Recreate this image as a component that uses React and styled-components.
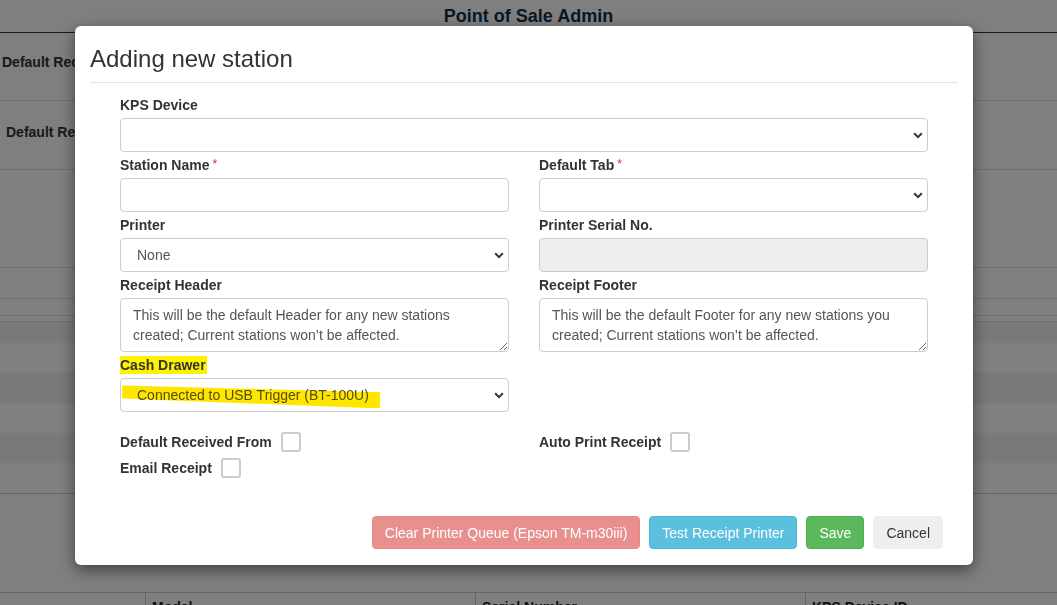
import React from "react"
import styled, { createGlobalStyle } from "styled-components"

const GlobalStyle = createGlobalStyle`
  html, body {
    margin: 0;
    padding: 0;
  }
  body {
    font-family: "Liberation Sans", Arial, sans-serif;
    font-size: 14px;
    color: #333;
    background: #fff;
    overflow: hidden;
  }
  * {
    box-sizing: border-box;
  }
`

/* ---------- page behind the dialog ---------- */

const Page = styled.div`
  width: 1057px;
  height: 605px;
  padding-right: 8px;
  overflow: hidden;
`

const PageTitle = styled.div`
  height: 33px;
  line-height: 32px;
  text-align: center;
  font-size: 18px;
  font-weight: 700;
  color: #12304a;
  border-bottom: 1px solid #1d3b57;
  margin-right: -8px;
`

const SettingRow = styled.div`
  display: flex;
  height: ${(props) => props.h}px;
  padding-top: ${(props) => props.pt || 0}px;
  padding-left: ${(props) => props.pl || 0}px;
  border-bottom: ${(props) => (props.line ? "1px solid #ddd" : "none")};
  margin-right: -8px;
`

const SettingLabel = styled.div`
  font-weight: 700;
  line-height: 20px;
  color: #333;
`

const StripeRow = styled.div`
  height: ${(props) => props.h}px;
  background: ${(props) => (props.odd ? "#f2f2f2" : "#fff")};
  border-bottom: ${(props) => (props.line ? "1px solid #ccc" : "none")};
  margin-right: -8px;
`

const TableHead = styled.div`
  display: grid;
  grid-template-columns: 145px 330px 330px 1fr;
  border-top: 1px solid #ccc;
  margin-right: -8px;
`

const HeadCell = styled.div`
  height: 30px;
  padding: 6px 6px 0;
  font-weight: 700;
  color: #222;
  border-left: ${(props) => (props.first ? "none" : "1px solid #ccc")};
`

/* ---------- dialog ---------- */

const Backdrop = styled.div`
  position: fixed;
  inset: 0;
  background: rgba(0, 0, 0, 0.5);
  display: flex;
  justify-content: center;
  align-items: flex-start;
  padding-top: 26px;
  padding-right: 9px;
`

const Modal = styled.div`
  width: 898px;
  background: #fff;
  border-radius: 6px;
  box-shadow: 0 5px 15px rgba(0, 0, 0, 0.5);
`

const ModalHeader = styled.div`
  margin: 0 15px;
  padding: 20px 0 10px;
  border-bottom: 1px solid #e5e5e5;
`

const ModalTitle = styled.h4`
  margin: 0;
  font-size: 24px;
  font-weight: 400;
  line-height: 1.1;
  color: #333;
`

const ModalBody = styled.div`
  padding: 12px 45px 0;
`

const FormGrid = styled.div`
  display: grid;
  grid-template-columns: 1fr 1fr;
  column-gap: 30px;
  row-gap: 3px;
`

const Field = styled.div`
  grid-column: ${(props) => (props.full ? "1 / -1" : "auto")};
`

const Label = styled.label`
  display: block;
  font-weight: 700;
  line-height: 20px;
  height: 20px;
  margin-bottom: 3px;
  color: #333;
`

const Marked = styled.span`
  background: #fff200;
  padding: 1px 1px 1px 0;
`

const Required = styled.span`
  position: relative;
  top: -2px;
  color: #e3262b;
  font-weight: 400;
  font-size: 12px;
  line-height: 0;
  margin-left: 3px;
`

const SelectWrap = styled.div`
  position: relative;
`

const Select = styled.select`
  display: block;
  width: 100%;
  height: 34px;
  padding: 0 28px 0 16px;
  font-family: inherit;
  font-size: 14px;
  color: #555;
  background: #fff;
  border: 1px solid #ccc;
  border-radius: 4px;
  appearance: none;
  outline: none;
`

const Chevron = styled.svg`
  position: absolute;
  right: 5px;
  top: 14px;
  pointer-events: none;
`

const Stroke = styled.span`
  position: absolute;
  left: 2px;
  top: 7px;
  width: 258px;
  height: 23px;
  background: #ffe600;
  clip-path: polygon(0 0, 100% 30%, 100% 100%, 0 57%);
  mix-blend-mode: multiply;
  pointer-events: none;
`

const Input = styled.input`
  display: block;
  width: 100%;
  height: 34px;
  padding: 6px 12px;
  font-family: inherit;
  font-size: 14px;
  color: #555;
  background: ${(props) => (props.disabled ? "#eee" : "#fff")};
  border: 1px solid #ccc;
  border-radius: 4px;
  outline: none;
`

const TextArea = styled.textarea`
  display: block;
  width: 100%;
  height: 54px;
  padding: 6px 12px;
  font-family: inherit;
  font-size: 14px;
  line-height: 20px;
  color: #555;
  background: #fff;
  border: 1px solid #ccc;
  border-radius: 4px;
  outline: none;
`

const CheckGrid = styled.div`
  display: grid;
  grid-template-columns: 1fr 1fr;
  column-gap: 30px;
  row-gap: 6px;
  margin-top: 20px;
`

const CheckItem = styled.div`
  display: flex;
  align-items: center;
  font-weight: 700;
  line-height: 20px;
  color: #333;
`

const Box = styled.span`
  display: inline-block;
  width: 20px;
  height: 20px;
  margin-left: 9px;
  border: 2px solid #ccc;
  border-radius: 3px;
  background: #fff;
`

const Footer = styled.div`
  display: flex;
  justify-content: flex-end;
  gap: 9px;
  padding: 38px 30px 16px;
`

const tones = {
  danger: { bg: "#e8908e", border: "#e68886", color: "#fff" },
  info: { bg: "#5bc0de", border: "#46b8da", color: "#fff" },
  success: { bg: "#5cb85c", border: "#4cae4c", color: "#fff" },
  plain: { bg: "#efefef", border: "#efefef", color: "#333" },
}

const Button = styled.button`
  height: 33px;
  padding: 0 12px;
  font-family: inherit;
  font-size: 14px;
  color: ${(props) => tones[props.tone].color};
  background: ${(props) => tones[props.tone].bg};
  border: 1px solid ${(props) => tones[props.tone].border};
  border-radius: 4px;
  cursor: pointer;
`

function DropDown({ value, marked }) {
  return (
    <SelectWrap>
      <Select defaultValue={value || ""}>
        <option value={value || ""}>{value || ""}</option>
      </Select>
      {marked && <Stroke />}
      <Chevron width="10" height="7" viewBox="0 0 10 7">
        <path d="M1.2 1.3 5 5.1 8.8 1.3" fill="none" stroke="#333" strokeWidth="2" />
      </Chevron>
    </SelectWrap>
  )
}

function App() {
  return (
    <>
      <GlobalStyle />
      <Page>
        <PageTitle>Point of Sale Admin</PageTitle>
        <SettingRow h={68} pt={19} pl={2} line>
          <SettingLabel>Default Receipt Header</SettingLabel>
        </SettingRow>
        <SettingRow h={69} pt={21} pl={6} line>
          <SettingLabel>Default Receipt Footer</SettingLabel>
        </SettingRow>
        <SettingRow h={98} line />
        <SettingRow h={31} line />
        <SettingRow h={17} line />
        <SettingRow h={6} line />
        <StripeRow h={21} odd />
        <StripeRow h={30} />
        <StripeRow h={30} odd />
        <StripeRow h={30} />
        <StripeRow h={30} odd />
        <StripeRow h={31} line />
        <SettingRow h={98} />
        <TableHead>
          <HeadCell first />
          <HeadCell>Model</HeadCell>
          <HeadCell>Serial Number</HeadCell>
          <HeadCell>KPS Device ID</HeadCell>
        </TableHead>
      </Page>

      <Backdrop>
        <Modal>
          <ModalHeader>
            <ModalTitle>Adding new station</ModalTitle>
          </ModalHeader>
          <ModalBody>
            <FormGrid>
              <Field full>
                <Label>KPS Device</Label>
                <DropDown />
              </Field>
              <Field>
                <Label>
                  Station Name<Required>*</Required>
                </Label>
                <Input type="text" />
              </Field>
              <Field>
                <Label>
                  Default Tab<Required>*</Required>
                </Label>
                <DropDown />
              </Field>
              <Field>
                <Label>Printer</Label>
                <DropDown value="None" />
              </Field>
              <Field>
                <Label>Printer Serial No.</Label>
                <Input type="text" disabled />
              </Field>
              <Field>
                <Label>Receipt Header</Label>
                <TextArea defaultValue="This will be the default Header for any new stations created; Current stations won’t be affected." />
              </Field>
              <Field>
                <Label>Receipt Footer</Label>
                <TextArea defaultValue="This will be the default Footer for any new stations you created; Current stations won’t be affected." />
              </Field>
              <Field>
                <Label>
                  <Marked>Cash Drawer</Marked>
                </Label>
                <DropDown value="Connected to USB Trigger (BT-100U)" marked />
              </Field>
            </FormGrid>
            <CheckGrid>
              <CheckItem>
                Default Received From <Box />
              </CheckItem>
              <CheckItem>
                Auto Print Receipt <Box />
              </CheckItem>
              <CheckItem>
                Email Receipt <Box />
              </CheckItem>
            </CheckGrid>
          </ModalBody>
          <Footer>
            <Button tone="danger">Clear Printer Queue (Epson TM-m30iii)</Button>
            <Button tone="info">Test Receipt Printer</Button>
            <Button tone="success">Save</Button>
            <Button tone="plain">Cancel</Button>
          </Footer>
        </Modal>
      </Backdrop>
    </>
  )
}

export default App
